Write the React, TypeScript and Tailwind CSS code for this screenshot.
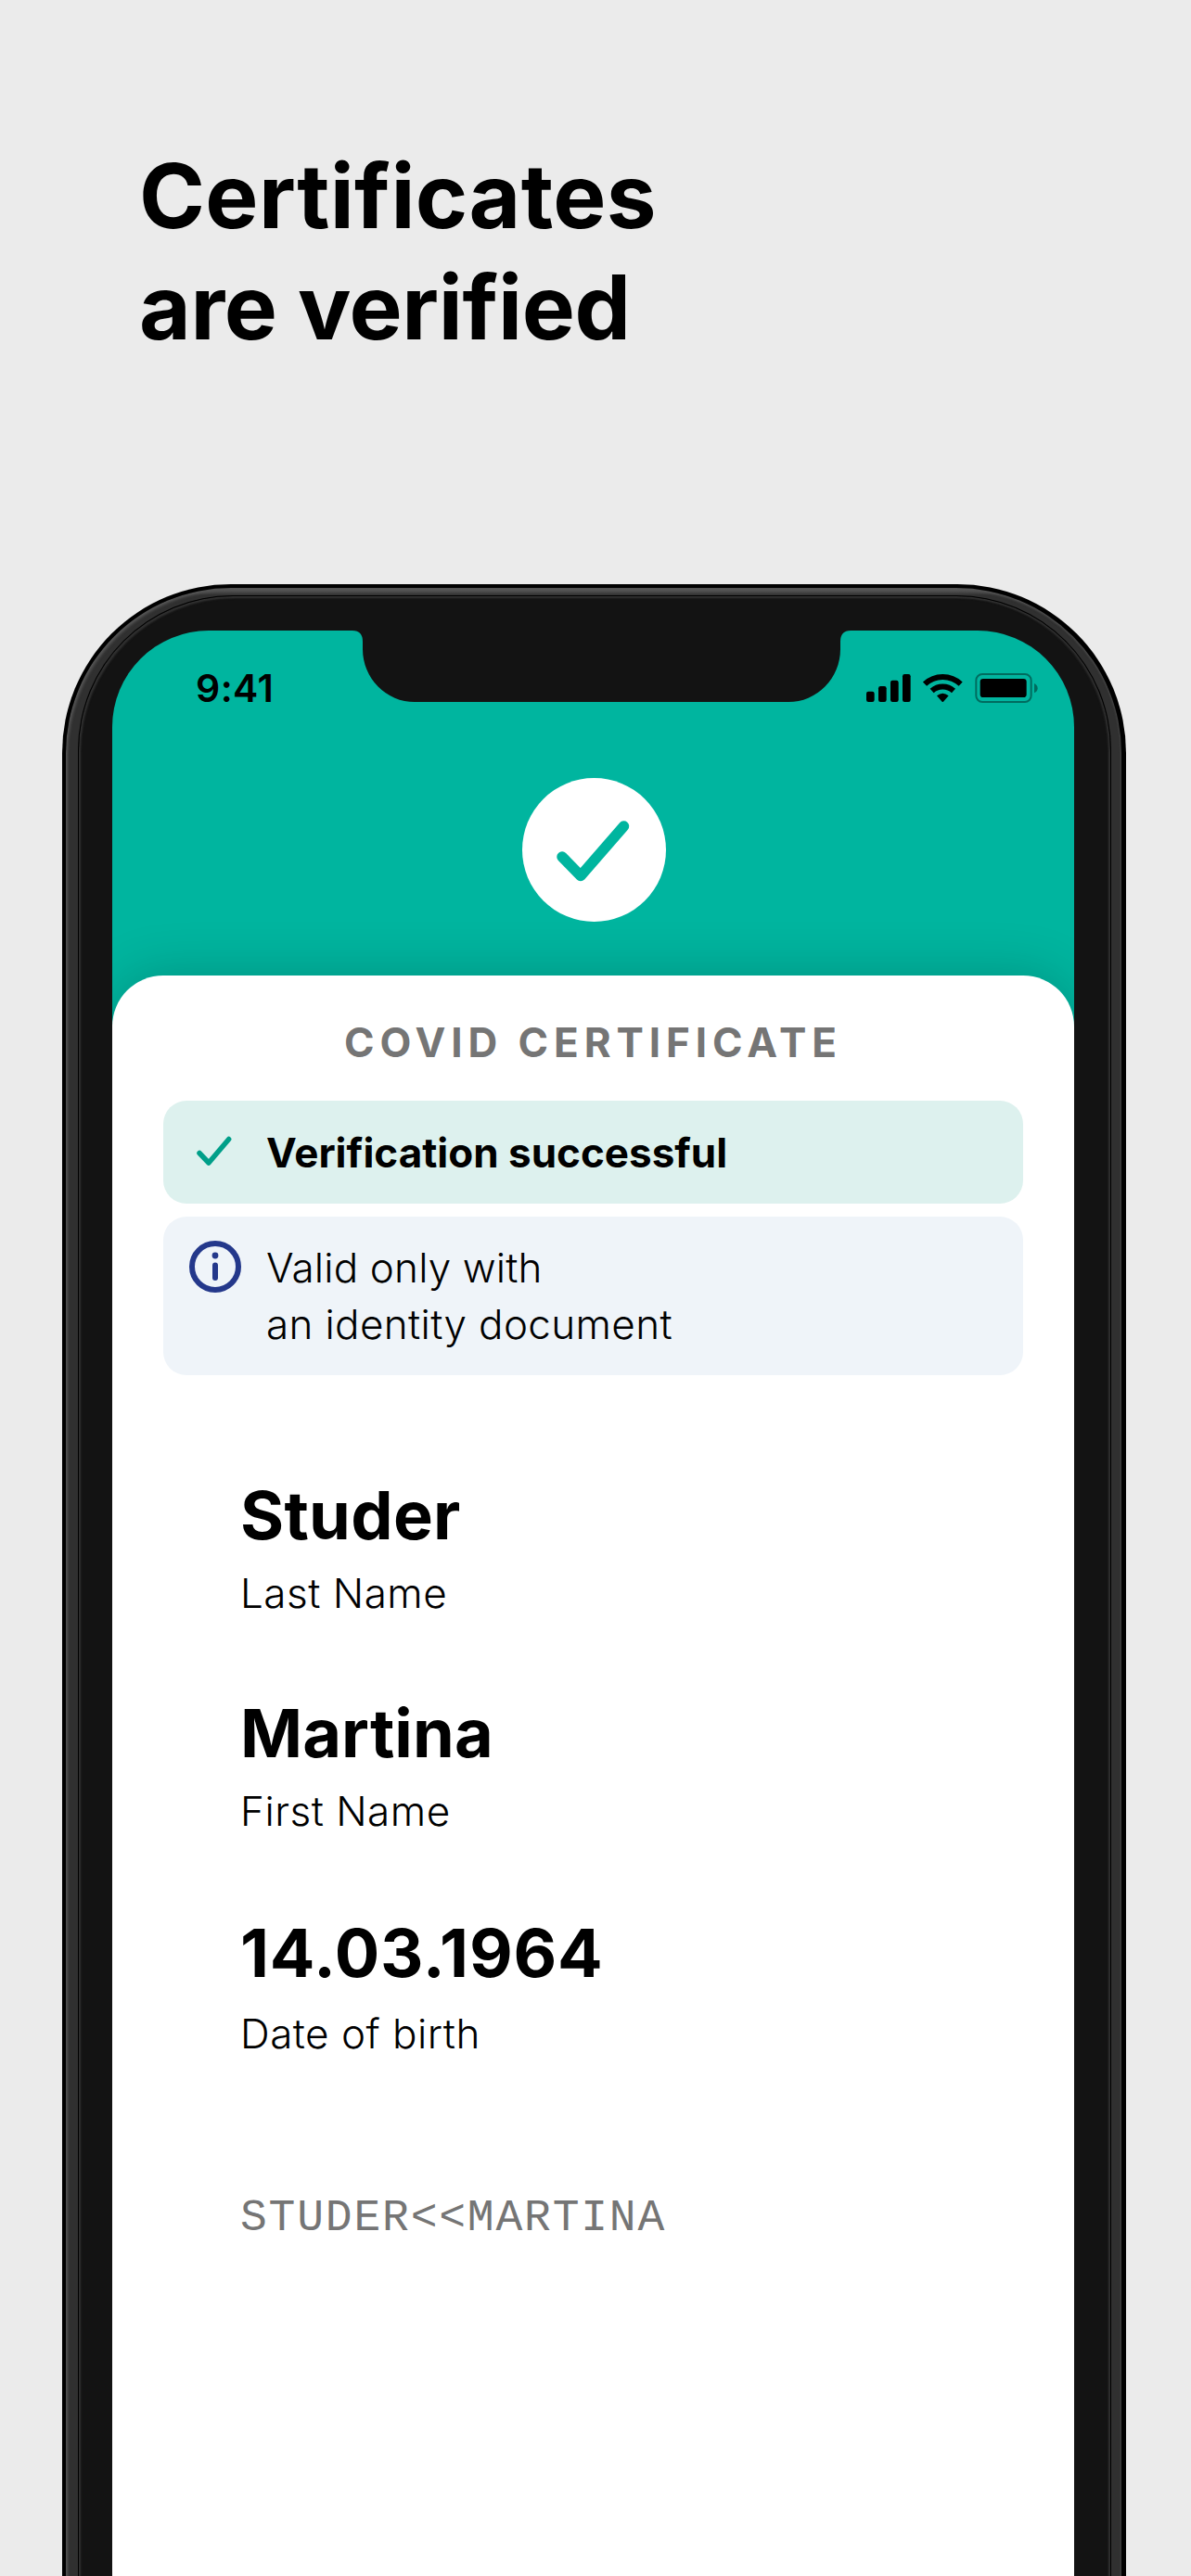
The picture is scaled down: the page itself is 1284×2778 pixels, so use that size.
const fields = [
  { value: "Studer", label: "Last Name", height: "h-[235px]", valueClass: "tracking-[0.3px]", labelClass: "mt-[7px]" },
  { value: "Martina", label: "First Name", height: "h-[237px]", valueClass: "tracking-[0.1px]", labelClass: "mt-[7px]" },
  { value: "14.03.1964", label: "Date of birth", height: "h-[305px]", valueClass: "tracking-[0.8px]", labelClass: "mt-[10px]" },
];

function StatusIcons() {
  return (
    <svg className="mt-[45px] mr-[35px] h-[35px] w-[189px]" viewBox="40 45 567 105">
      <rect x="40" y="107" width="26" height="34" rx="7" />
      <rect x="79" y="90" width="26" height="51" rx="7" />
      <rect x="118" y="71" width="26" height="70" rx="7" />
      <rect x="157" y="51" width="26" height="90" rx="7" />
      <g fill="none" stroke="#000" strokeWidth="18">
        <path d="M229 83 A84 84 0 0 1 345 83" />
        <path d="M252 105 A52 52 0 0 1 322 105" />
      </g>
      <path d="M268 121 Q287 105 306 121 L289 140 Q287 142 285 140 Z" />
      <rect x="395" y="51" width="178" height="90" rx="20" fill="none" stroke="#000" strokeWidth="6" opacity="0.4" />
      <rect x="408" y="66" width="150" height="60" rx="10" />
      <path d="M583 81 Q594 86 594 97 Q594 107 583 112 Z" opacity="0.4" />
    </svg>
  );
}

function Notch() {
  return (
    <svg className="absolute top-0 left-[259px] h-[77px] w-[537px]" viewBox="0 0 537 77" fill="#131313">
      <path d="M0 0 Q11 0 11 12 V20 A56 57 0 0 0 67 77 H470 A56 57 0 0 0 526 20 V12 Q526 0 537 0 Z" />
    </svg>
  );
}

export default function App() {
  return (
    <main className="flex h-[2778px] w-[1284px] flex-col overflow-hidden bg-[#ebebeb] font-['Inter',sans-serif] text-black">
      <h1 className="h-[630px] shrink-0 pt-[151px] pl-[150px] text-[96px] leading-[120px] font-bold">
        <span className="block tracking-[0.35px]">Certificates</span>
        <span className="block tracking-[-0.35px]">are verified</span>
      </h1>

      <div className="ml-[67px] h-[2148px] w-[1147px] shrink-0 rounded-t-[182px] bg-black pt-[4px] pr-[5px] pl-[4px]">
        <div className="h-full rounded-t-[178px] bg-[#303030] bg-linear-to-b from-[#686868] to-[#303030] to-[8px] pt-[8px] pr-[11px] pl-[13px] shadow-[inset_2px_2px_3px_#555,inset_-1px_1px_2px_#444]">
          <div className="h-full rounded-t-[167px] border-x border-t border-black bg-[#131313] pt-[37px] pr-[38px] pl-[36px] shadow-[inset_2px_2px_2px_#303030,inset_-2px_1px_2px_#303030]">
            <section className="relative flex h-full w-[1037px] flex-col overflow-hidden rounded-t-[104px] bg-[#00b59f]">
              <Notch />
              <header className="flex h-[159px] shrink-0 justify-between">
                <span className="mt-[38px] ml-[90px] text-[41px] leading-[48px] font-semibold tracking-[0.4px]">9:41</span>
                <StatusIcons />
              </header>
              <div className="flex h-[213px] shrink-0 justify-center pl-[2px]">
                <svg className="h-[155px] w-[155px]" viewBox="0 0 155 155">
                  <circle cx="77.5" cy="77.5" r="77.5" fill="#fff" />
                  <path d="M43 85 L63 105.5 L109.5 52" fill="none" stroke="#00b59f" strokeWidth="11.5" strokeLinecap="round" strokeLinejoin="round" />
                </svg>
              </div>

              <div className="flex flex-1 flex-col rounded-t-[55px] bg-white px-[55px] shadow-[0_0_60px_rgba(0,0,0,0.2)]">
                <h2 className="h-[135px] pt-[46px] text-center text-[44px] leading-[52px] font-bold tracking-[5.9px] text-[#757575]">
                  COVID CERTIFICATE
                </h2>
                <div className="flex h-[111px] items-center rounded-[25px] bg-[#ddf1ee] text-[44px] font-bold">
                  <svg className="mr-[19px] ml-[28px] h-[56px] w-[64px] shrink-0" viewBox="0 0 64 56" fill="none" stroke="#009f89" strokeWidth="5.5" strokeLinecap="round" strokeLinejoin="round">
                    <path d="M11 28.5 L21 39 L42.7 13.5" />
                  </svg>
                  Verification successful
                </div>
                <div className="mt-[14px] flex h-[171px] rounded-[25px] bg-[#eff4f9] pt-[25px] text-[44px] leading-[61px] font-light">
                  <svg className="mt-[1px] mr-[27px] ml-[28px] h-[56px] w-[56px] shrink-0" viewBox="0 0 56 56" fill="none" stroke="#24388b" strokeWidth="6">
                    <circle cx="28" cy="28" r="25" />
                    <path d="M28 26.5 V40" strokeLinecap="round" />
                    <circle cx="28" cy="16" r="3.4" fill="#24388b" stroke="none" />
                  </svg>
                  <p>
                    <span className="block tracking-[0.15px]">Valid only with</span>
                    <span className="block tracking-[0.35px]">an identity document</span>
                  </p>
                </div>

                <dl className="flex flex-col pt-[104px] pl-[83px]">
                  {fields.map((f) => (
                    <div key={f.label} className={`flex flex-col-reverse justify-end ${f.height}`}>
                      <dt className={`text-[44px] leading-[60px] font-light tracking-[0.5px] ${f.labelClass}`}>{f.label}</dt>
                      <dd className={`text-[72px] leading-[94px] font-bold ${f.valueClass}`}>{f.value}</dd>
                    </div>
                  ))}
                </dl>
                <p className="pl-[83px] font-['Liberation_Mono',monospace] text-[48px] leading-[56px] tracking-[1.8px] text-[#757575]">
                  STUDER&lt;&lt;MARTINA
                </p>
              </div>
            </section>
          </div>
        </div>
      </div>
    </main>
  );
}
